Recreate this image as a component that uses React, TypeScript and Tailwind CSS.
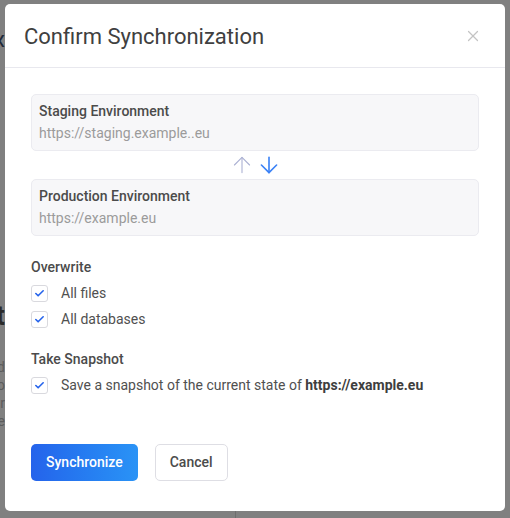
import { ArrowDown, ArrowUp, Check, X } from "lucide-react";

function CheckRow({ children }: { children: React.ReactNode }) {
  return (
    <label className="flex h-[26px] items-center gap-[13px]">
      <span className="flex h-[17px] w-[17px] items-center justify-center rounded-[3px] border border-[#d9d9de] bg-white">
        <Check className="h-[11px] w-[11px] text-[#2563eb]" strokeWidth={3.5} />
      </span>
      <span className="text-[14px] text-[#505050]">{children}</span>
    </label>
  );
}

function EnvCard({ name, url }: { name: string; url: string }) {
  return (
    <div className="rounded-[5px] border border-[#ebebf0] bg-[#f7f7f9] px-[7px] pt-[5px] pb-[6px] leading-[22px]">
      <div className="text-[14px] font-medium text-[#4b4b4b]">{name}</div>
      <div className="text-[14px] text-[#9b9b9b]">{url}</div>
    </div>
  );
}

export default function App() {
  return (
    <div
      className="relative h-[518px] w-full overflow-hidden bg-[#808080]"
      style={{ fontFamily: "Roboto, 'Noto Sans', sans-serif" }}
    >
      {/* Page behind the overlay */}
      <div className="flex h-[511px] w-[5px] flex-col items-end overflow-hidden whitespace-nowrap">
        <div className="mt-[26px] text-[22px] leading-[28px] text-[#1d2838]">Sandbox</div>
        <div className="mt-[246px] text-[27px] font-bold leading-[32px] text-[#2a2a2a]">Report</div>
        <div className="mt-[26px] text-[14px] leading-[18px] text-[#5c5c5c]">Last modified</div>
        <div className="text-[14px] leading-[18px] text-[#5c5c5c]">Hello</div>
        <div className="text-[14px] leading-[18px] text-[#5c5c5c]">Your</div>
        <div className="text-[14px] leading-[18px] text-[#5c5c5c]">Here</div>
        <div className="mt-[76px] text-[14px] leading-[18px] text-[#222] underline">Settings</div>
      </div>
      <div className="ml-[235px] h-[7px] border-l border-[#6e6e6e]" />

      {/* Modal */}
      <div className="absolute left-[5px] top-[4px] flex h-[507px] w-[500px] flex-col rounded-[5px] bg-white">
        <div className="flex h-[64px] items-center justify-between border-b border-[#e8e8ee] pl-[19px] pr-[23px]">
          <h2 className="pt-[2px] text-[22px] text-[#404040]">Confirm Synchronization</h2>
          <X className="h-[18px] w-[18px] text-[#c4c4c4]" strokeWidth={1.6} />
        </div>

        <div className="flex flex-col px-[26px] pt-[26px]">
          <EnvCard name="Staging Environment" url="https://staging.example..eu" />
          <div className="flex h-[28px] items-center justify-center gap-[1px]">
            <ArrowUp className="h-[26px] w-[26px] text-[#aab0d2]" strokeWidth={1} />
            <ArrowDown className="h-[26px] w-[26px] text-[#3b82f6]" strokeWidth={1.5} />
          </div>
          <EnvCard name="Production Environment" url="https://example.eu" />

          <div className="mt-[21px] text-[14px] font-medium leading-[20px] text-[#4b4b4b]">Overwrite</div>
          <div className="mt-[3px] flex flex-col">
            <CheckRow>All files</CheckRow>
            <CheckRow>All databases</CheckRow>
          </div>

          <div className="mt-[17px] text-[14px] font-medium leading-[20px] text-[#4b4b4b]">Take Snapshot</div>
          <div className="mt-[3px] flex flex-col">
            <CheckRow>
              Save a snapshot of the current state of{" "}
              <span className="font-bold text-[#3e3e3e]">https://example.eu</span>
            </CheckRow>
          </div>

          <div className="mt-[46px] flex gap-[17px]">
            <button className="h-[37px] rounded-[5px] bg-gradient-to-r from-[#2563eb] to-[#2a93f6] px-[15px] text-[14px] font-medium text-white">
              Synchronize
            </button>
            <button className="h-[37px] rounded-[5px] border border-[#dedee4] bg-white px-[14px] text-[14px] font-medium text-[#4b4b4b]">
              Cancel
            </button>
          </div>
        </div>
      </div>
    </div>
  );
}
